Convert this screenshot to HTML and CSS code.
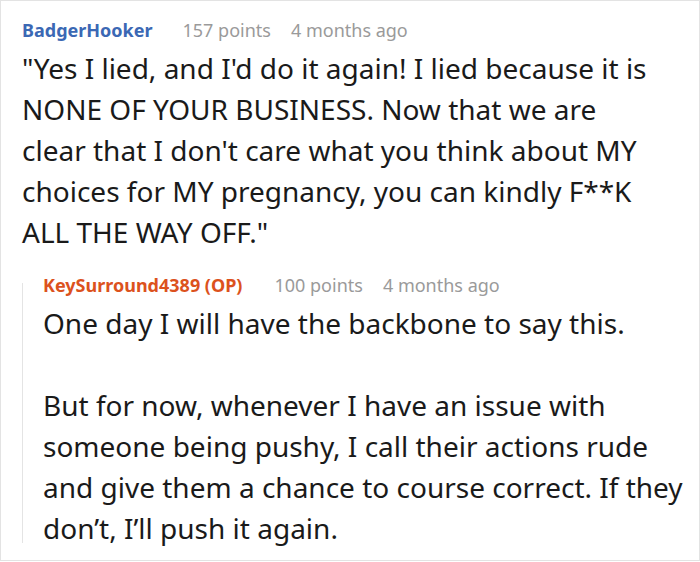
FILE: index.html
```html
<!DOCTYPE html>
<html>
<head>
<meta charset="utf-8">
<link rel="stylesheet" href="styles.css">
</head>
<body>
<div class="frame">
  <div class="comment">
    <div class="meta">
      <span class="author">BadgerHooker</span>
      <span class="info">157 points</span>
      <span class="info">4 months ago</span>
    </div>
    <div class="text main-text">
      <p>"Yes I lied, and I'd do it again! I lied because it is NONE OF YOUR BUSINESS. Now that we are clear that I don't care what you think about MY choices for MY pregnancy, you can kindly F**K ALL THE WAY OFF."</p>
    </div>
    <div class="reply">
      <div class="meta">
        <span class="author op">KeySurround4389 (OP)</span>
        <span class="info">100 points</span>
        <span class="info">4 months ago</span>
      </div>
      <div class="text reply-text">
        <p>One day I will have the backbone to say this.</p>
        <p>But for now, whenever I have an issue with someone being pushy, I call their actions rude and give them a chance to course correct. If they don’t, I’ll push it again.</p>
      </div>
    </div>
  </div>
</div>
</body>
</html>
```

FILE: styles.css
```css
html, body {
  margin: 0;
  padding: 0;
  background: #ffffff;
}
body {
  font-family: "Noto Sans", "Open Sans", sans-serif;
  color: #1a1a1a;
}
.frame {
  width: 700px;
  height: 561px;
  box-sizing: border-box;
  border: 1px solid #e3e3e3;
  overflow: hidden;
}
.comment {
  padding: 16px 0 0 21px;
}
.meta {
  display: flex;
  gap: 20px;
  font-size: 18px;
  line-height: 26px;
  align-items: baseline;
  white-space: nowrap;
}
.author {
  font-weight: bold;
  color: #3b68b4;
  margin-right: 10px;
}
.author.op {
  color: #dc521d;
  margin-right: 12px;
}
.info {
  color: #9a9a9a;
}
.text {
  margin-top: 5px;
}
.text p {
  margin: 0;
  font-size: 28px;
  line-height: 41px;
}
.main-text {
  width: 632px;
}
.reply-text {
  width: 646px;
}
.reply {
  display: flex;
  flex-direction: column;
  margin-top: 30px;
  border-left: 1px solid #e4e4e4;
  padding-left: 20px;
}
.reply .meta {
  margin-top: -11px;
}
.reply .text {
  margin-bottom: -6px;
}
.reply .text p + p {
  margin-top: 41px;
}
```
